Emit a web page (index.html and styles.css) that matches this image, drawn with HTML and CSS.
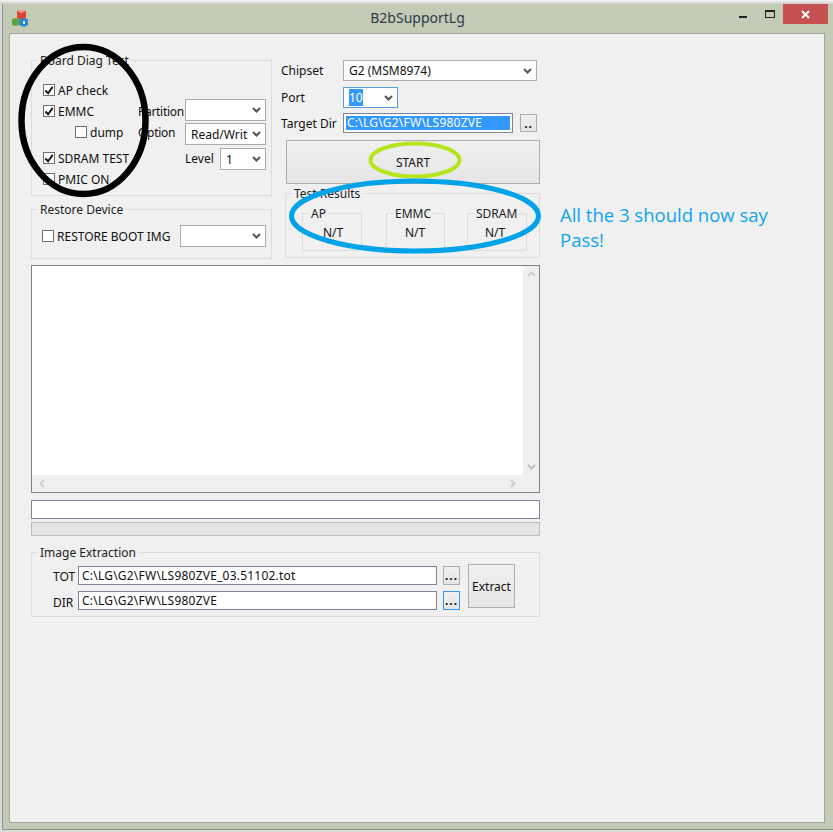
FILE: index.html
```html
<!DOCTYPE html>
<html lang="en">
<head>
<meta charset="utf-8">
<title>B2bSupportLg</title>
<link rel="stylesheet" href="styles.css">
</head>
<body>
<div class="backdrop"></div>
<div class="window">
  <header class="titlebar">
    <svg class="app-icon" width="16" height="17" viewBox="0 0 16 17">
      <path d="M5 1l5-1 4 1v7l-5 2-4-2z" fill="#d8452e"/>
      <path d="M5 1l5-1 4 1-5 2z" fill="#f3a58c"/>
      <path d="M0 9l4-1 3 1v6l-3 1-4-1z" fill="#5fa63a"/>
      <path d="M7 9l4-1 5 1v6l-4 2-5-2z" fill="#2f86c8"/>
      <path d="M11 11h2v3h-2z" fill="#cfe6f7"/>
    </svg>
    <h1 class="title">B2bSupportLg</h1>
    <div class="controls">
      <span class="ctl-min"></span>
      <span class="ctl-max"></span>
      <span class="ctl-close">
        <svg width="9" height="9" viewBox="0 0 9 9"><path d="M1 1l7 7M8 1L1 8" stroke="#fff" stroke-width="2" fill="none"/></svg>
      </span>
    </div>
  </header>
  <main class="client">
    <div class="main-col">
      <div class="top-row">
        <div class="left-col">
          <section class="group board">
            <div class="legend">Board Diag Test</div>
            <div class="brow r1">
              <span class="check on"><svg width="11" height="11" viewBox="0 0 11 11"><path d="M1.5 5.5l3 3 5-7" stroke="#111" stroke-width="2" fill="none"/></svg></span><span class="txt">AP check</span>
            </div>
            <div class="brow r2">
              <div class="left-part">
                <span class="check on"><svg width="11" height="11" viewBox="0 0 11 11"><path d="M1.5 5.5l3 3 5-7" stroke="#111" stroke-width="2" fill="none"/></svg></span><span class="txt">EMMC</span>
              </div>
              <span class="side-label">Partition</span>
              <div class="select w81"><span class="val"></span><svg class="chev" width="9" height="6" viewBox="0 0 9 6"><path d="M1 1l3.5 3.5L8 1" stroke="#555" stroke-width="2" fill="none"/></svg></div>
            </div>
            <div class="brow r3">
              <div class="left-part dump">
                <span class="check"></span><span class="txt">dump</span>
              </div>
              <span class="side-label">Option</span>
              <div class="select w81"><span class="val">Read/Writ</span><svg class="chev" width="9" height="6" viewBox="0 0 9 6"><path d="M1 1l3.5 3.5L8 1" stroke="#555" stroke-width="2" fill="none"/></svg></div>
            </div>
            <div class="brow r4">
              <div class="left-part wide">
                <span class="check on"><svg width="11" height="11" viewBox="0 0 11 11"><path d="M1.5 5.5l3 3 5-7" stroke="#111" stroke-width="2" fill="none"/></svg></span><span class="txt">SDRAM TEST</span>
              </div>
              <span class="side-label short">Level</span>
              <div class="select w46"><span class="val">1</span><svg class="chev" width="9" height="6" viewBox="0 0 9 6"><path d="M1 1l3.5 3.5L8 1" stroke="#555" stroke-width="2" fill="none"/></svg></div>
            </div>
            <div class="brow r5">
              <span class="check"></span><span class="txt">PMIC ON</span>
            </div>
          </section>
          <section class="group restore">
            <div class="legend">Restore Device</div>
            <div class="restore-row">
              <span class="check"></span><span class="txt restore-txt">RESTORE BOOT IMG</span>
              <div class="select w86"><span class="val"></span><svg class="chev" width="9" height="6" viewBox="0 0 9 6"><path d="M1 1l3.5 3.5L8 1" stroke="#555" stroke-width="2" fill="none"/></svg></div>
            </div>
          </section>
        </div>
        <div class="right-col">
          <div class="frow chipset">
            <span class="flabel">Chipset</span>
            <div class="select w194"><span class="val">G2 (MSM8974)</span><svg class="chev" width="9" height="6" viewBox="0 0 9 6"><path d="M1 1l3.5 3.5L8 1" stroke="#555" stroke-width="2" fill="none"/></svg></div>
          </div>
          <div class="frow port">
            <span class="flabel">Port</span>
            <div class="select w55 focus"><span class="val"><span class="sel">10</span></span><svg class="chev" width="9" height="6" viewBox="0 0 9 6"><path d="M1 1l3.5 3.5L8 1" stroke="#555" stroke-width="2" fill="none"/></svg></div>
          </div>
          <div class="frow target">
            <span class="flabel">Target Dir</span>
            <div class="input target-input"><span class="sel-full">C:\LG\G2\FW\LS980ZVE</span></div>
            <button class="btn dots small" type="button">..</button>
          </div>
          <button class="btn start" type="button">START</button>
          <section class="group results">
            <div class="legend">Test Results</div>
            <div class="result-row">
              <div class="group res ap"><div class="legend">AP</div><div class="nt nt-ap">N/T</div></div>
              <div class="group res emmc"><div class="legend">EMMC</div><div class="nt nt-emmc">N/T</div></div>
              <div class="group res sdram"><div class="legend">SDRAM</div><div class="nt nt-sdram">N/T</div></div>
            </div>
          </section>
        </div>
      </div>
      <div class="log">
        <div class="log-top">
          <div class="log-text"></div>
          <div class="vscroll">
            <svg width="9" height="6" viewBox="0 0 9 6"><path d="M1 5l3.5-3.5L8 5" stroke="#cfcfcf" stroke-width="2" fill="none"/></svg>
            <svg width="9" height="6" viewBox="0 0 9 6"><path d="M1 1l3.5 3.5L8 1" stroke="#bdbdbd" stroke-width="2" fill="none"/></svg>
          </div>
        </div>
        <div class="hscroll">
          <svg width="6" height="9" viewBox="0 0 6 9"><path d="M5 1L1.500 4.500 5 8" stroke="#cfcfcf" stroke-width="2" fill="none"/></svg>
          <svg width="6" height="9" viewBox="0 0 6 9"><path d="M1 1l3.500 3.500L1 8" stroke="#cfcfcf" stroke-width="2" fill="none"/></svg>
        </div>
      </div>
      <div class="status-input"></div>
      <div class="progress"></div>
      <section class="group extract">
        <div class="legend">Image Extraction</div>
        <div class="extract-body">
          <div class="extract-rows">
            <div class="xrow tot">
              <span class="xlabel">TOT</span>
              <div class="input xinput">C:\LG\G2\FW\LS980ZVE_03.51102.tot</div>
              <button class="btn dots" type="button">...</button>
            </div>
            <div class="xrow dir">
              <span class="xlabel dir-label">DIR</span>
              <div class="input xinput">C:\LG\G2\FW\LS980ZVE</div>
              <button class="btn dots active" type="button">...</button>
            </div>
          </div>
          <button class="btn extract-btn" type="button">Extract</button>
        </div>
      </section>
    </div>
    <p class="note">All the 3 should now say Pass!</p>
  </main>
  <svg class="marks" width="833" height="832" viewBox="0 0 833 832">
    <ellipse cx="83.500" cy="120.500" rx="62" ry="73.500" fill="none" stroke="#000" stroke-width="6.500"/>
    <ellipse cx="415" cy="160" rx="44.500" ry="16.500" fill="none" stroke="#b5e61d" stroke-width="4"/>
    <ellipse cx="415" cy="216" rx="123.500" ry="35" fill="none" stroke="#00a2e8" stroke-width="5"/>
  </svg>
</div>
</body>
</html>
```
FILE: styles.css
```css
* { box-sizing: border-box; }
html, body { margin: 0; height: 832px; overflow: hidden; background: #dcdcdc; }
body { font-family: "Noto Sans", "DejaVu Sans", sans-serif; font-size: 12px; color: #111; padding: 0 0 2px 2px; }
.backdrop { height: 4px; margin-left: -2px; background: linear-gradient(#f4f4f4, #d0d0d0); }
.window { width: 831px; height: 826px; background: #c3cbb7; border-left: 1px solid #8f948a; border-bottom: 1px solid #8f948a; display: flex; flex-direction: column; }
.titlebar { height: 29px; flex: none; display: flex; align-items: flex-start; position: relative; padding-left: 9px; }
.app-icon { margin-top: 6px; }
.title { flex: 1; margin: 4px 0 0; padding-left: 68px; text-align: center; font-weight: 400; font-size: 14px; line-height: 20px; color: #2c3a48; }
.controls { display: flex; height: 20px; }
.ctl-min { width: 8px; height: 2px; background: #222; margin: 12px 18px 0 0; }
.ctl-max { width: 10px; height: 8px; border: 1px solid #222; border-top-width: 2px; margin: 6px 8px 0 0; }
.ctl-close { width: 45px; height: 20px; background: #c75050; display: flex; align-items: center; justify-content: center; margin-right: 5px; }
.client { flex: none; margin: 0 0 0 6px; width: 816px; height: 790px; background: #f0f0f0; border: 1px solid #a0a59a; padding: 26px 0 0 21px; display: flex; }
.main-col { width: 509px; flex: none; }
.top-row { display: flex; justify-content: space-between; height: 198px; }
.left-col { width: 241px; }
.right-col { width: 255px; }
.group { border: 1px solid #dcdcdc; }
.legend { display: table; background: #f0f0f0; margin: -7px 0 0 6px; padding: 0 2px; height: 14px; line-height: 14px; color: #222; }
.board { height: 136px; }
.brow { display: flex; align-items: center; padding-left: 11px; }
.r1 { height: 20px; margin-top: 12px; }
.r2 { height: 22px; }
.r2 .select { margin-top: -2px; }
.r3 { height: 22px; margin-top: 1px; }
.r4 { height: 22px; margin-top: 3px; }
.r5 { height: 16px; margin-top: 1px; }
.left-part { width: 95px; display: flex; align-items: center; flex: none; }
.dump { padding-left: 32px; margin-top: -4px; }
.wide { width: 142px; margin-top: -2px; }
.check { width: 12px; height: 12px; border: 1px solid #707070; background: #fff; flex: none; display: flex; }
.txt { margin-left: 3px; white-space: nowrap; }
.side-label { width: 47px; flex: none; margin-top: -4px; white-space: nowrap; letter-spacing: -.3px; }
.r2 .side-label { margin-top: 0; }
.side-label.short { width: 35px; margin-top: -2px; letter-spacing: 0; }
.select { height: 22px; border: 1px solid #ababab; background: #fff; display: flex; align-items: center; justify-content: space-between; padding: 0 4px 0 5px; flex: none; }
.w81 { width: 81px; }
.w46 { width: 46px; }
.w86 { width: 86px; }
.w194 { width: 194px; }
.w55 { width: 55px; }
.focus { border-color: #569de5; }
.val { white-space: nowrap; }
.sel { background: #3399ff; color: #fff; }
.restore { height: 50px; margin-top: 13px; }
.restore-row { display: flex; align-items: center; padding-left: 10px; height: 22px; margin-top: 8px; }
.restore-txt { width: 123px; flex: none; }
.frow { display: flex; align-items: center; }
.flabel { width: 62px; margin-left: -4px; flex: none; white-space: nowrap; }
.chipset { height: 21px; }
.chipset .select, .port .select { height: 21px; }
.port { height: 21px; margin-top: 6px; }
.target { height: 20px; margin-top: 5px; }
.input { border: 1px solid #7f8596; background: #fff; white-space: nowrap; letter-spacing: .22px; }
.target-input { width: 170px; height: 20px; padding: 2px; line-height: 14px; }
.sel-full { display: block; background: #3399ff; color: #fff; height: 14px; padding-left: 1px; }
.btn { font: inherit; color: #111; border: 1px solid #adadad; background: linear-gradient(#f0f0f0, #e5e5e5); padding: 0; }
.dots { width: 17px; height: 19px; line-height: 15px; flex: none; margin-left: 6px; letter-spacing: 1px; font-weight: 700; }
.dots.small { margin-left: 7px; height: 18px; }
.dots.active { border-color: #3399ff; }
.start { display: block; width: 254px; height: 44px; margin: 7px 0 0 1px; }
.results { height: 65px; margin-top: 9px; }
.result-row { display: flex; padding: 12px 0 0 16px; }
.res { height: 38px; width: 60px; flex: none; }
.res .legend { margin-left: 6px; padding: 0 2px; }
.res.emmc { margin-left: 24px; width: 59px; }
.res.sdram { margin-left: 22px; }
.nt { line-height: 14px; margin-top: 5px; }
.nt-ap { padding-left: 20px; }
.nt-emmc { padding-left: 18px; }
.nt-sdram { padding-left: 17px; }
.log { height: 228px; margin-top: 7px; border: 1px solid #838383; background: #f0f0f0; display: flex; flex-direction: column; }
.log-top { display: flex; height: 209px; flex: none; }
.log-text { flex: 1; background: #fff; }
.vscroll { width: 16px; display: flex; flex-direction: column; justify-content: space-between; align-items: center; padding: 5px 0; }
.hscroll { flex: 1; display: flex; justify-content: space-between; align-items: center; padding: 0 23px 0 7px; }
.status-input { height: 19px; margin-top: 7px; border: 1px solid #7f8596; background: #fff; }
.progress { height: 14px; margin-top: 3px; border: 1px solid #bcbcbc; background: #e4e4e4; }
.extract { height: 65px; margin-top: 16px; }
.extract-body { display: flex; }
.extract-rows { width: 436px; flex: none; }
.xrow { display: flex; align-items: center; height: 19px; }
.tot { margin-top: 6px; }
.dir { margin-top: 6px; }
.tot .xlabel { margin-top: 2px; }
.xlabel { width: 46px; padding-left: 21px; flex: none; }
.dir-label { margin-top: 4px; }
.xinput { width: 359px; height: 19px; line-height: 17px; padding-left: 3px; flex: none; }
.extract-btn { width: 47px; height: 44px; margin-top: 4px; }
.note { width: 225px; margin: 142px 0 0 20px; font-family: "Open Sans", sans-serif; font-size: 18.5px; line-height: 25px; color: #0fa5ee; }
.marks { position: absolute; left: 0; top: 0; pointer-events: none; }
```
